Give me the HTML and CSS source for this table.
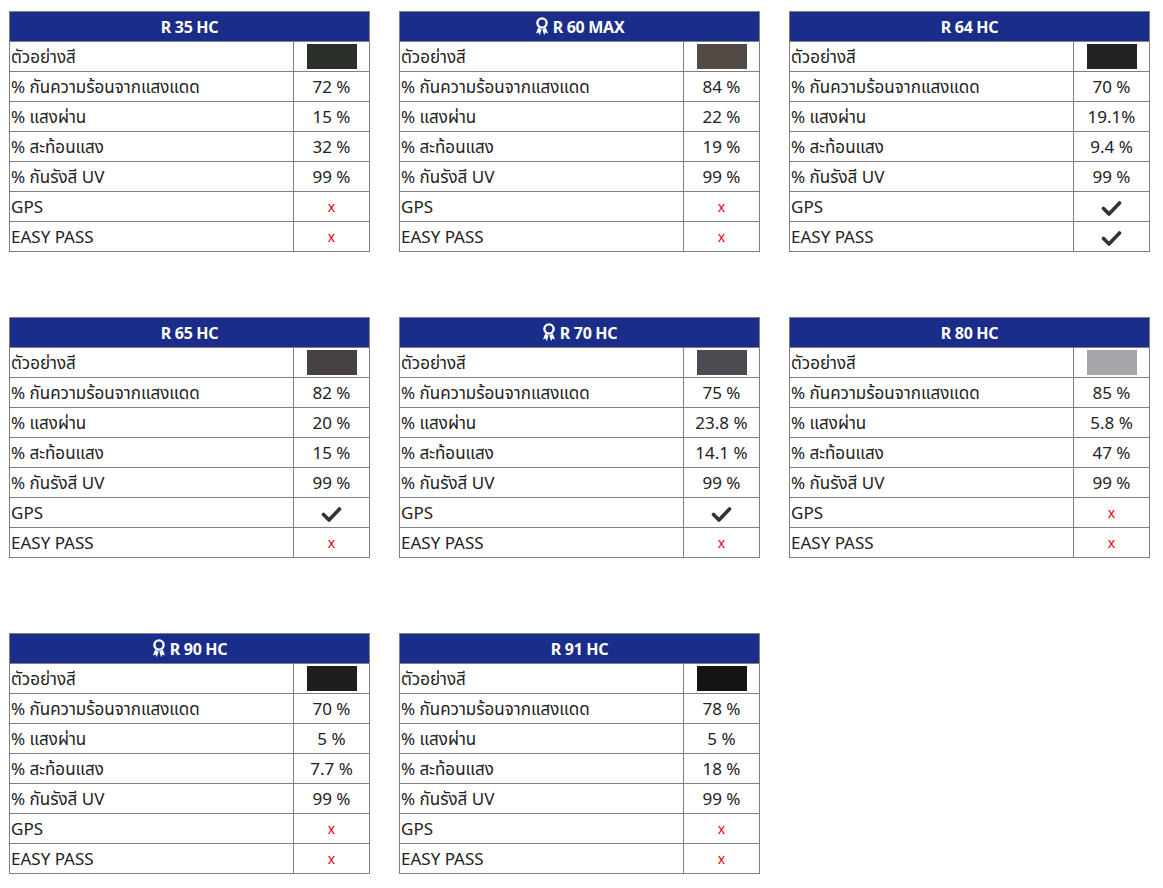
FILE: index.html
```html
<!DOCTYPE html>
<html lang="th">
<head>
<meta charset="utf-8">
<title>Film specs</title>
<link rel="stylesheet" href="styles.css">
</head>
<body>
<svg width="0" height="0" class="defs" aria-hidden="true">
  <defs>
    <symbol id="award" viewBox="0 0 14 20">
      <circle cx="7" cy="6" r="4.6" fill="none" stroke="#fff" stroke-width="2.4"/>
      <path d="M3.2 10.5 L1 16.5 L3.6 15.6 L4.8 18.2 L6.6 12.6 Z" fill="#fff"/>
      <path d="M10.8 10.5 L13 16.5 L10.4 15.6 L9.2 18.2 L7.4 12.6 Z" fill="#fff"/>
    </symbol>
    <symbol id="check" viewBox="0 0 20 16">
      <path d="M2 8.5 L7.5 14 L18 3" fill="none" stroke="#333" stroke-width="3.6" stroke-linecap="round" stroke-linejoin="round"/>
    </symbol>
  </defs>
</svg>
<main class="grid">

<table class="spec">
  <colgroup><col class="c-label"><col class="c-val"></colgroup>
  <tr><th colspan="2">R 35 HC</th></tr>
  <tr><td>ตัวอย่างสี</td><td class="val"><span class="swatch" style="background:#2b302a"></span></td></tr>
  <tr><td>% กันความร้อนจากแสงแดด</td><td class="val">72 %</td></tr>
  <tr><td>% แสงผ่าน</td><td class="val">15 %</td></tr>
  <tr><td>% สะท้อนแสง</td><td class="val">32 %</td></tr>
  <tr><td>% กันรังสี UV</td><td class="val">99 %</td></tr>
  <tr><td>GPS</td><td class="val"><span class="no">x</span></td></tr>
  <tr><td>EASY PASS</td><td class="val"><span class="no">x</span></td></tr>
</table>

<table class="spec">
  <colgroup><col class="c-label"><col class="c-val"></colgroup>
  <tr><th colspan="2"><svg class="award"><use href="#award"/></svg>R 60 MAX</th></tr>
  <tr><td>ตัวอย่างสี</td><td class="val"><span class="swatch" style="background:#524a44"></span></td></tr>
  <tr><td>% กันความร้อนจากแสงแดด</td><td class="val">84 %</td></tr>
  <tr><td>% แสงผ่าน</td><td class="val">22 %</td></tr>
  <tr><td>% สะท้อนแสง</td><td class="val">19 %</td></tr>
  <tr><td>% กันรังสี UV</td><td class="val">99 %</td></tr>
  <tr><td>GPS</td><td class="val"><span class="no">x</span></td></tr>
  <tr><td>EASY PASS</td><td class="val"><span class="no">x</span></td></tr>
</table>

<table class="spec">
  <colgroup><col class="c-label"><col class="c-val"></colgroup>
  <tr><th colspan="2">R 64 HC</th></tr>
  <tr><td>ตัวอย่างสี</td><td class="val"><span class="swatch" style="background:#222222"></span></td></tr>
  <tr><td>% กันความร้อนจากแสงแดด</td><td class="val">70 %</td></tr>
  <tr><td>% แสงผ่าน</td><td class="val">19.1%</td></tr>
  <tr><td>% สะท้อนแสง</td><td class="val">9.4 %</td></tr>
  <tr><td>% กันรังสี UV</td><td class="val">99 %</td></tr>
  <tr><td>GPS</td><td class="val"><svg class="check"><use href="#check"/></svg></td></tr>
  <tr><td>EASY PASS</td><td class="val"><svg class="check"><use href="#check"/></svg></td></tr>
</table>

<table class="spec">
  <colgroup><col class="c-label"><col class="c-val"></colgroup>
  <tr><th colspan="2">R 65 HC</th></tr>
  <tr><td>ตัวอย่างสี</td><td class="val"><span class="swatch" style="background:#474141"></span></td></tr>
  <tr><td>% กันความร้อนจากแสงแดด</td><td class="val">82 %</td></tr>
  <tr><td>% แสงผ่าน</td><td class="val">20 %</td></tr>
  <tr><td>% สะท้อนแสง</td><td class="val">15 %</td></tr>
  <tr><td>% กันรังสี UV</td><td class="val">99 %</td></tr>
  <tr><td>GPS</td><td class="val"><svg class="check"><use href="#check"/></svg></td></tr>
  <tr><td>EASY PASS</td><td class="val"><span class="no">x</span></td></tr>
</table>

<table class="spec">
  <colgroup><col class="c-label"><col class="c-val"></colgroup>
  <tr><th colspan="2"><svg class="award"><use href="#award"/></svg>R 70 HC</th></tr>
  <tr><td>ตัวอย่างสี</td><td class="val"><span class="swatch" style="background:#4b4b51"></span></td></tr>
  <tr><td>% กันความร้อนจากแสงแดด</td><td class="val">75 %</td></tr>
  <tr><td>% แสงผ่าน</td><td class="val">23.8 %</td></tr>
  <tr><td>% สะท้อนแสง</td><td class="val">14.1 %</td></tr>
  <tr><td>% กันรังสี UV</td><td class="val">99 %</td></tr>
  <tr><td>GPS</td><td class="val"><svg class="check"><use href="#check"/></svg></td></tr>
  <tr><td>EASY PASS</td><td class="val"><span class="no">x</span></td></tr>
</table>

<table class="spec">
  <colgroup><col class="c-label"><col class="c-val"></colgroup>
  <tr><th colspan="2">R 80 HC</th></tr>
  <tr><td>ตัวอย่างสี</td><td class="val"><span class="swatch" style="background:#a7a7ab"></span></td></tr>
  <tr><td>% กันความร้อนจากแสงแดด</td><td class="val">85 %</td></tr>
  <tr><td>% แสงผ่าน</td><td class="val">5.8 %</td></tr>
  <tr><td>% สะท้อนแสง</td><td class="val">47 %</td></tr>
  <tr><td>% กันรังสี UV</td><td class="val">99 %</td></tr>
  <tr><td>GPS</td><td class="val"><span class="no">x</span></td></tr>
  <tr><td>EASY PASS</td><td class="val"><span class="no">x</span></td></tr>
</table>

<table class="spec">
  <colgroup><col class="c-label"><col class="c-val"></colgroup>
  <tr><th colspan="2"><svg class="award"><use href="#award"/></svg>R 90 HC</th></tr>
  <tr><td>ตัวอย่างสี</td><td class="val"><span class="swatch" style="background:#1e1e1e"></span></td></tr>
  <tr><td>% กันความร้อนจากแสงแดด</td><td class="val">70 %</td></tr>
  <tr><td>% แสงผ่าน</td><td class="val">5 %</td></tr>
  <tr><td>% สะท้อนแสง</td><td class="val">7.7 %</td></tr>
  <tr><td>% กันรังสี UV</td><td class="val">99 %</td></tr>
  <tr><td>GPS</td><td class="val"><span class="no">x</span></td></tr>
  <tr><td>EASY PASS</td><td class="val"><span class="no">x</span></td></tr>
</table>

<table class="spec">
  <colgroup><col class="c-label"><col class="c-val"></colgroup>
  <tr><th colspan="2">R 91 HC</th></tr>
  <tr><td>ตัวอย่างสี</td><td class="val"><span class="swatch" style="background:#141414"></span></td></tr>
  <tr><td>% กันความร้อนจากแสงแดด</td><td class="val">78 %</td></tr>
  <tr><td>% แสงผ่าน</td><td class="val">5 %</td></tr>
  <tr><td>% สะท้อนแสง</td><td class="val">18 %</td></tr>
  <tr><td>% กันรังสี UV</td><td class="val">99 %</td></tr>
  <tr><td>GPS</td><td class="val"><span class="no">x</span></td></tr>
  <tr><td>EASY PASS</td><td class="val"><span class="no">x</span></td></tr>
</table>

</main>
</body>
</html>
```

FILE: styles.css
```css
html, body {
  margin: 0;
  padding: 0;
  background: #ffffff;
}

body {
  font-family: "Noto Sans", "Noto Sans Thai", "DejaVu Sans", sans-serif;
  color: #222222;
}

.defs {
  position: absolute;
  width: 0;
  height: 0;
  overflow: hidden;
}

.grid {
  display: grid;
  grid-template-columns: repeat(3, 360px);
  column-gap: 30px;
  row-gap: 65px;
  padding: 11px 0 0 9px;
  align-items: start;
}

.spec {
  width: 360px;
  border-collapse: collapse;
  table-layout: fixed;
  font-size: 17px;
}

.spec:nth-child(n+7) {
  margin-top: 10px;
}

.c-label {
  width: 284px;
}

.c-val {
  width: 76px;
}

.spec th,
.spec td {
  border: 1px solid #808080;
  height: 29px;
  padding: 0;
  line-height: 20px;
  white-space: nowrap;
  overflow: hidden;
}

.spec th {
  background: #1b2d8b;
  color: #ffffff;
  font-weight: 700;
  font-size: 16px;
  letter-spacing: -0.3px;
  text-align: center;
}

.spec td {
  padding-left: 1px;
  vertical-align: middle;
}

.spec td.val {
  padding: 0;
  text-align: center;
}

.swatch {
  display: inline-block;
  width: 50px;
  height: 25px;
  vertical-align: middle;
}

.no {
  color: #e8000b;
  font-size: 14px;
}

.check {
  width: 21px;
  height: 16px;
  vertical-align: middle;
}

.award {
  width: 14px;
  height: 20px;
  vertical-align: -4px;
  margin-right: 4px;
}
```
